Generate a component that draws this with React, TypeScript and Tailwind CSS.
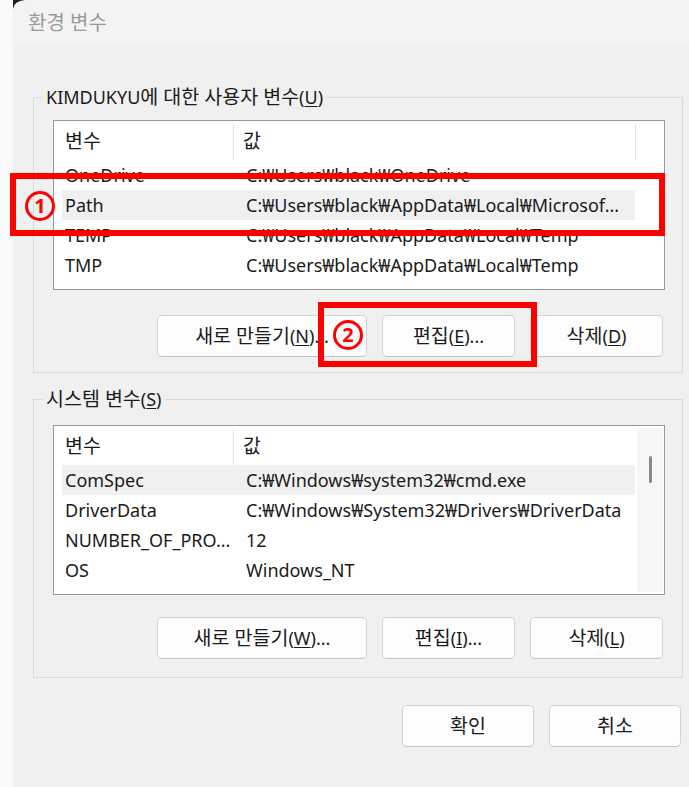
import React from "react";

type Row = { name: string; value: string; hl?: boolean };

const userRows: Row[] = [
  { name: "OneDrive", value: "C:₩Users₩black₩OneDrive" },
  { name: "Path", value: "C:₩Users₩black₩AppData₩Local₩Microsof...", hl: true },
  { name: "TEMP", value: "C:₩Users₩black₩AppData₩Local₩Temp" },
  { name: "TMP", value: "C:₩Users₩black₩AppData₩Local₩Temp" },
];

const sysRows: Row[] = [
  { name: "ComSpec", value: "C:₩Windows₩system32₩cmd.exe", hl: true },
  { name: "DriverData", value: "C:₩Windows₩System32₩Drivers₩DriverData" },
  { name: "NUMBER_OF_PRO...", value: "12" },
  { name: "OS", value: "Windows_NT" },
];

function K({ children }: { children: React.ReactNode }) {
  return <span className="text-[19.5px]">{children}</span>;
}

function ListView({ rows, scrollbar }: { rows: Row[]; scrollbar?: boolean }) {
  return (
    <div className="flex h-[170px] w-full min-w-0 overflow-hidden border border-[#999999] bg-white">
      <div className="flex min-w-0 flex-1 flex-col pl-[8px]">
        <div className="flex h-[39px] shrink-0 items-center">
          <div className="w-[171px] pl-[3px]">
            <K>변수</K>
          </div>
          <div className="mt-[3px] w-px self-stretch bg-[#e3e3e3]" />
          <div className="flex-1 pl-[9px]">
            <K>값</K>
          </div>
        </div>
        {rows.map((r, i) => (
          <div
            key={i}
            className={`flex h-[30px] shrink-0 items-center whitespace-nowrap ${r.hl ? "bg-[#f0f0f0]" : ""}`}
          >
            <div className="w-[184px] shrink-0 pl-[3px]">{r.name}</div>
            <div className="min-w-0 flex-1 overflow-hidden">{r.value}</div>
          </div>
        ))}
      </div>
      {scrollbar ? (
        <div className="my-[2px] ml-[2px] mr-px flex w-[26px] shrink-0 flex-col items-center bg-[#f6f6f6] pt-[28px]">
          <div className="h-[27px] w-[3px] rounded-full bg-[#8a8a8a]" />
        </div>
      ) : (
        <div className="flex w-[29px] shrink-0 flex-col">
          <div className="mt-[3px] h-[36px] w-px bg-[#e3e3e3]" />
        </div>
      )}
    </div>
  );
}

function Btn({ className, children }: { className: string; children: React.ReactNode }) {
  return (
    <div
      className={`flex h-[42px] shrink-0 items-center justify-center whitespace-nowrap rounded-[5px] border border-[#d4d4d4] border-b-[#c2c2c2] bg-[#fdfdfd] text-[#1a1a1a] ${className}`}
    >
      {children}
    </div>
  );
}

function Mn({ children }: { children: React.ReactNode }) {
  return <u className="underline underline-offset-[2px]">{children}</u>;
}

export default function App() {
  return (
    <div className="relative flex h-[787px] w-[689px] overflow-hidden bg-[#f9f9f9] font-['Noto_Sans','Noto_Sans_CJK_KR',sans-serif] text-[18px] text-[#1a1a1a]">
      <div className="w-[13px] shrink-0" />
      <div className="relative flex w-[690px] shrink-0 flex-col bg-[#f0f0f0]">
        <div className="relative flex h-[45px] shrink-0 items-center bg-[#f3f3f3] pl-[15px] text-[20px] text-[#9a9a9a]">
          <svg className="absolute left-0 top-0" width="12" height="9" viewBox="0 0 12 9">
            <path d="M0 0 H12 Q1 1 0 9 Z" fill="#1e1e1e" />
          </svg>
          환경 변수
        </div>

        <fieldset className="ml-[20px] mt-[41px] w-[650px] min-w-0 border border-[#dadada] pb-[15px] pl-[19px] pr-[17px] pt-[12px]">
          <legend className="-ml-[10px] px-[3px] leading-[22px]">
            KIMDUKYU<K>에 대한 사용자 변수</K>(<Mn>U</Mn>)
          </legend>
          <ListView rows={userRows} />
          <div className="mt-[25px] flex justify-end gap-[15px] pr-[2px]">
            <Btn className="w-[210px]">
              <K>새로 만들기</K>(<Mn>N</Mn>)...
            </Btn>
            <Btn className="w-[133px]">
              <K>편집</K>(<Mn>E</Mn>)...
            </Btn>
            <Btn className="w-[133px]">
              <K>삭제</K>(<Mn>D</Mn>)
            </Btn>
          </div>
        </fieldset>

        <fieldset className="ml-[20px] mt-[15px] w-[650px] min-w-0 border border-[#dadada] pb-[18px] pl-[19px] pr-[17px] pt-[15px]">
          <legend className="-ml-[10px] px-[3px] leading-[22px]">
            <K>시스템 변수</K>(<Mn>S</Mn>)
          </legend>
          <ListView rows={sysRows} scrollbar />
          <div className="mt-[22px] flex justify-end gap-[15px] pr-[2px]">
            <Btn className="w-[210px]">
              <K>새로 만들기</K>(<Mn>W</Mn>)...
            </Btn>
            <Btn className="w-[133px]">
              <K>편집</K>(<Mn>I</Mn>)...
            </Btn>
            <Btn className="w-[133px]">
              <K>삭제</K>(<Mn>L</Mn>)
            </Btn>
          </div>
        </fieldset>

        <div className="mt-[27px] flex w-[668px] justify-end gap-[15px]">
          <Btn className="w-[132px]">
            <K>확인</K>
          </Btn>
          <Btn className="w-[132px]">
            <K>취소</K>
          </Btn>
        </div>
      </div>

      {/* annotations */}
      <div className="absolute left-[10px] top-[173px] h-[63px] w-[655px] border-[6px] border-[#ff0000]" />
      <div className="absolute left-[25px] top-[191px] flex h-[30px] w-[30px] items-center justify-center rounded-full border-[3px] border-[#ff0000] text-[20px] font-bold leading-none text-[#ff0000]">
        1
      </div>
      <div className="absolute left-[318px] top-[302px] h-[65px] w-[219px] border-[6px] border-[#ff0000]" />
      <div className="absolute left-[333px] top-[320px] flex h-[30px] w-[30px] items-center justify-center rounded-full border-[3px] border-[#ff0000] text-[20px] font-bold leading-none text-[#ff0000]">
        2
      </div>
    </div>
  );
}
